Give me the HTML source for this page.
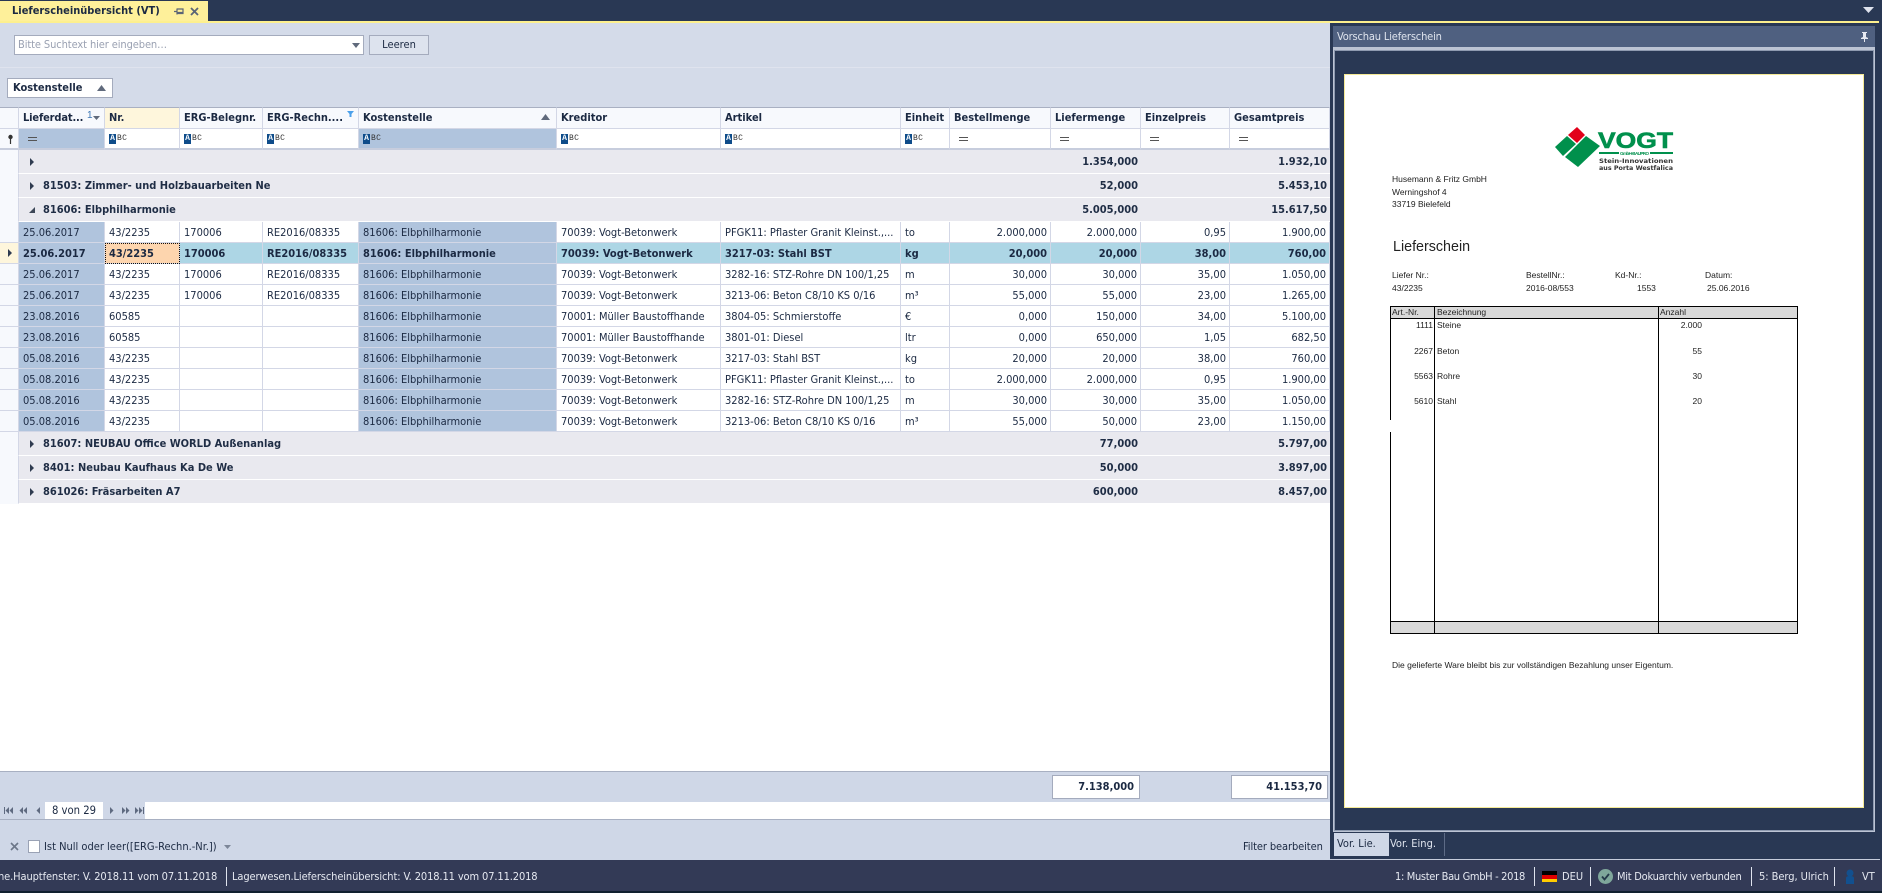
<!DOCTYPE html>
<html lang="de"><head><meta charset="utf-8"><title>Lieferscheinübersicht (VT)</title>
<style>
*{box-sizing:border-box}
html,body{margin:0;padding:0}
body{width:1882px;height:893px;overflow:hidden;position:relative;background:#293854;font:11px "DejaVu Sans",sans-serif;font-stretch:condensed;color:#1b2942}
.a{position:absolute;white-space:nowrap}
table{position:absolute;left:0;top:107px;width:1330px;table-layout:fixed;border-collapse:separate;border-spacing:0;background:transparent}
td{padding:0 4px;white-space:nowrap;overflow:hidden;border-right:1px solid #d3d7e6;border-bottom:1px solid #d3d7e6;background:#fff;height:21px;line-height:19px}
td:first-child{background:#f7f9fd;padding:0}
tr.d td:nth-child(2),tr.d td:nth-child(6){background:#b0c4dd}
tr.d td:nth-child(n+10){text-align:right;padding-right:3px}
tr.s td{font-weight:bold;background:#add6e5}
tr.s td:first-child{background:#fef6dc;position:relative}
tr.s td.f{background:#fdd5ae;outline:1px dotted #111;outline-offset:-1px}
tr.h td{height:21px;background:#f7f9fd;font-weight:bold;border-top:1px solid #a9b0c2;padding-bottom:1px;border-bottom:0;line-height:19px;position:relative}
tr.h td.n{background:#fef6dc}
tr.b td{height:22px;border-bottom:2px solid #c7cddd;position:relative;border-top:1px solid #d3d7e6}
tr.b td.m{background:#b0c4dd}
tr.g td{height:24px;background:#e9e9ef;border-right:0;border-bottom:1px solid #fff;font-weight:bold;color:#1f2d45}
tr.g td:first-child{background:#f7f9fd;border-right:1px solid #d3d7e6;border-bottom:1px solid #f7f9fd}
tr.g td.r{text-align:right;padding-right:3px}
tr.g td.l{padding-left:24px;position:relative}
.tr{position:absolute;left:11px;top:8px;width:0;height:0;border-left:4px solid #2f3b50;border-top:4px solid transparent;border-bottom:4px solid transparent}
.td{position:absolute;left:10px;top:9px;width:0;height:0;border-right:6px solid #3d4858;border-top:6px solid transparent}
.ab{display:inline-block;font:bold 8px/10px "Liberation Mono",monospace;width:7px;height:10px;background:#0e4c8a;color:#fff;text-align:center;vertical-align:middle}
.bc{display:inline-block;font:8px/10px "Liberation Mono",monospace;color:#333;vertical-align:middle;margin-left:1px;letter-spacing:.3px}
.eq{display:block;width:9px;height:4px;border-top:1px solid #555;border-bottom:1px solid #555;margin-left:5px}
.sep{position:absolute;top:867px;width:1px;height:19px;background:#dfe3ee}
.st{position:absolute;top:867px;line-height:19px;color:#e6e9f1;white-space:nowrap}
.doc{position:absolute;white-space:nowrap;font:8.5px/11px "Liberation Sans",sans-serif;color:#222;font-stretch:normal}
.bl{position:absolute;background:#000}
</style></head><body>

<!-- top tab bar -->
<div class="a" style="left:0;top:1px;width:208px;height:21px;background:#fef09a"></div>
<div class="a" style="left:12px;top:2px;line-height:18px;font-size:11px;font-weight:bold;color:#1b2942">Lieferscheinübersicht (VT)</div>
<svg class="a" style="left:172px;top:6px" width="30" height="11" viewBox="0 0 30 11"><path d="M2 5.5h3M5 2.5v6M5 3h6v4.5H5M5 6.5h6" stroke="#5a6476" stroke-width="1.2" fill="none"/><path d="M19 2l7 7M26 2l-7 7" stroke="#5a6476" stroke-width="1.8"/></svg>
<svg class="a" style="left:1863px;top:7px" width="12" height="6"><path d="M0 0h11L5.500 6z" fill="#dfe3ee"/></svg>
<div class="a" style="left:0;top:21px;width:1879px;height:2px;background:#fdf08e"></div>

<!-- main toolbar -->
<div class="a" style="left:0;top:23px;width:1330px;height:84px;background:#d4dbe9"></div>
<div class="a" style="left:14px;top:35px;width:350px;height:20px;background:#fff;border:1px solid #a4abbd;line-height:18px;padding-left:3px;color:#9aa1b2;font-size:11px;letter-spacing:-.1px">Bitte Suchtext hier eingeben…</div>
<svg class="a" style="left:352px;top:43px" width="9" height="5"><path d="M0 0h8L4 5z" fill="#606a7c"/></svg>
<div class="a" style="left:369px;top:35px;width:60px;height:20px;background:#dde3ee;border:1px solid #a4abbd;line-height:18px;text-align:center">Leeren</div>
<div class="a" style="left:0;top:67px;width:1330px;height:1px;background:#dfe3ee"></div>
<div class="a" style="left:7px;top:78px;width:106px;height:20px;background:#fff;border:1px solid #a4abbd;line-height:18px;padding-left:5px;font-weight:bold">Kostenstelle</div>
<svg class="a" style="left:97px;top:85px" width="10" height="6"><path d="M0 6h9L4.500 0z" fill="#606a7c"/></svg>

<!-- grid background -->
<div class="a" style="left:0;top:504px;width:1330px;height:267px;background:#fff"></div>

<table>
<colgroup><col style="width:19px"><col style="width:86px"><col style="width:75px"><col style="width:83px"><col style="width:96px"><col style="width:198px"><col style="width:164px"><col style="width:180px"><col style="width:49px"><col style="width:101px"><col style="width:90px"><col style="width:89px"><col style="width:100px"></colgroup>
<tr class="h"><td></td><td style="letter-spacing:-.15px">Lieferdat...</td><td class="n">Nr.</td><td>ERG-Belegnr.</td><td>ERG-Rechn....</td><td>Kostenstelle</td><td>Kreditor</td><td>Artikel</td><td>Einheit</td><td>Bestellmenge</td><td>Liefermenge</td><td>Einzelpreis</td><td>Gesamtpreis</td></tr>
<tr class="b"><td></td><td class="m"><i class="eq"></i></td><td><i class="ab">A</i><i class="bc">BC</i></td><td><i class="ab">A</i><i class="bc">BC</i></td><td><i class="ab">A</i><i class="bc">BC</i></td><td class="m"><i class="ab">A</i><i class="bc">BC</i></td><td><i class="ab">A</i><i class="bc">BC</i></td><td><i class="ab">A</i><i class="bc">BC</i></td><td><i class="ab">A</i><i class="bc">BC</i></td><td><i class="eq"></i></td><td><i class="eq"></i></td><td><i class="eq"></i></td><td><i class="eq"></i></td></tr>
<tr class="g"><td></td><td class="l" colspan="9"><i class="tr"></i></td><td class="r">1.354,000</td><td></td><td class="r">1.932,10</td></tr>
<tr class="g"><td></td><td class="l" colspan="9"><i class="tr"></i>81503: Zimmer- und Holzbauarbeiten Ne</td><td class="r">52,000</td><td></td><td class="r">5.453,10</td></tr>
<tr class="g"><td></td><td class="l" colspan="9"><i class="td"></i>81606: Elbphilharmonie</td><td class="r">5.005,000</td><td></td><td class="r">15.617,50</td></tr>
<tr class="d"><td></td><td>25.06.2017</td><td>43/2235</td><td>170006</td><td>RE2016/08335</td><td>81606: Elbphilharmonie</td><td>70039: Vogt-Betonwerk</td><td>PFGK11: Pflaster Granit Kleinst.,...</td><td>to</td><td>2.000,000</td><td>2.000,000</td><td>0,95</td><td>1.900,00</td></tr>
<tr class="d s"><td><i class="tr" style="left:8px;top:6px"></i></td><td>25.06.2017</td><td class="f">43/2235</td><td>170006</td><td>RE2016/08335</td><td>81606: Elbphilharmonie</td><td>70039: Vogt-Betonwerk</td><td>3217-03: Stahl BST</td><td>kg</td><td>20,000</td><td>20,000</td><td>38,00</td><td>760,00</td></tr>
<tr class="d"><td></td><td>25.06.2017</td><td>43/2235</td><td>170006</td><td>RE2016/08335</td><td>81606: Elbphilharmonie</td><td>70039: Vogt-Betonwerk</td><td>3282-16: STZ-Rohre DN 100/1,25</td><td>m</td><td>30,000</td><td>30,000</td><td>35,00</td><td>1.050,00</td></tr>
<tr class="d"><td></td><td>25.06.2017</td><td>43/2235</td><td>170006</td><td>RE2016/08335</td><td>81606: Elbphilharmonie</td><td>70039: Vogt-Betonwerk</td><td>3213-06: Beton C8/10 KS 0/16</td><td>m³</td><td>55,000</td><td>55,000</td><td>23,00</td><td>1.265,00</td></tr>
<tr class="d"><td></td><td>23.08.2016</td><td>60585</td><td></td><td></td><td>81606: Elbphilharmonie</td><td>70001: Müller Baustoffhande</td><td>3804-05: Schmierstoffe</td><td>€</td><td>0,000</td><td>150,000</td><td>34,00</td><td>5.100,00</td></tr>
<tr class="d"><td></td><td>23.08.2016</td><td>60585</td><td></td><td></td><td>81606: Elbphilharmonie</td><td>70001: Müller Baustoffhande</td><td>3801-01: Diesel</td><td>ltr</td><td>0,000</td><td>650,000</td><td>1,05</td><td>682,50</td></tr>
<tr class="d"><td></td><td>05.08.2016</td><td>43/2235</td><td></td><td></td><td>81606: Elbphilharmonie</td><td>70039: Vogt-Betonwerk</td><td>3217-03: Stahl BST</td><td>kg</td><td>20,000</td><td>20,000</td><td>38,00</td><td>760,00</td></tr>
<tr class="d"><td></td><td>05.08.2016</td><td>43/2235</td><td></td><td></td><td>81606: Elbphilharmonie</td><td>70039: Vogt-Betonwerk</td><td>PFGK11: Pflaster Granit Kleinst.,...</td><td>to</td><td>2.000,000</td><td>2.000,000</td><td>0,95</td><td>1.900,00</td></tr>
<tr class="d"><td></td><td>05.08.2016</td><td>43/2235</td><td></td><td></td><td>81606: Elbphilharmonie</td><td>70039: Vogt-Betonwerk</td><td>3282-16: STZ-Rohre DN 100/1,25</td><td>m</td><td>30,000</td><td>30,000</td><td>35,00</td><td>1.050,00</td></tr>
<tr class="d"><td></td><td>05.08.2016</td><td>43/2235</td><td></td><td></td><td>81606: Elbphilharmonie</td><td>70039: Vogt-Betonwerk</td><td>3213-06: Beton C8/10 KS 0/16</td><td>m³</td><td>55,000</td><td>50,000</td><td>23,00</td><td>1.150,00</td></tr>
<tr class="g"><td></td><td class="l" colspan="9"><i class="tr"></i>81607: NEUBAU Office WORLD Außenanlag</td><td class="r">77,000</td><td></td><td class="r">5.797,00</td></tr>
<tr class="g"><td></td><td class="l" colspan="9"><i class="tr"></i>8401: Neubau Kaufhaus Ka De We</td><td class="r">50,000</td><td></td><td class="r">3.897,00</td></tr>
<tr class="g"><td></td><td class="l" colspan="9"><i class="tr"></i>861026: Fräsarbeiten A7</td><td class="r">600,000</td><td></td><td class="r">8.457,00</td></tr>
</table>

<!-- header glyphs -->
<svg class="a" style="left:86px;top:110px" width="16" height="12"><text x="1" y="8" font-size="10" font-family="Liberation Sans" fill="#3f78b5">1</text><path d="M7 6h7l-3.500 4z" fill="#606a7c"/></svg>
<svg class="a" style="left:347px;top:111px" width="8" height="8"><path d="M0 0h7L4.500 3v3h-2V3z" fill="#4ba0ea"/></svg>
<svg class="a" style="left:541px;top:114px" width="10" height="6"><path d="M0 6h9L4.500 0z" fill="#606a7c"/></svg>
<svg class="a" style="left:6px;top:134px" width="9" height="11"><circle cx="4.500" cy="3" r="2.200" fill="#333"/><path d="M4.500 5v5" stroke="#333" stroke-width="1.200"/></svg>

<!-- footer -->
<div class="a" style="left:0;top:771px;width:1330px;height:89px;background:#cfd7e7"></div>
<div class="a" style="left:0;top:771px;width:1330px;height:1px;background:#a8b0c2"></div>
<div class="a" style="left:1052px;top:775px;width:88px;height:24px;background:#fff;border:1px solid #a4abbd;text-align:right;padding-right:5px;line-height:22px;font-weight:bold">7.138,000</div>
<div class="a" style="left:1231px;top:775px;width:97px;height:24px;background:#fff;border:1px solid #a4abbd;text-align:right;padding-right:5px;line-height:22px;font-weight:bold">41.153,70</div>
<div class="a" style="left:145px;top:802px;width:1185px;height:17px;background:#fff"></div>
<div class="a" style="left:45px;top:802px;width:58px;height:17px;background:#fff;text-align:center;line-height:17px;font-size:11.200px">8 von 29</div>
<div class="a" style="left:0;top:819px;width:1330px;height:1px;background:#a8b0c2"></div>
<svg class="a" style="left:4px;top:806px" width="142" height="10" fill="#5f6a80"><path d="M0 1h1v7H0zM5 1v7L1.500 4.500zM9 1v7L5.500 4.500zM19 1v7L15.500 4.500zM23 1v7L19.500 4.500zM36 1v7L32.500 4.500zM106 1v7l3.500-3.500zM118 1v7l3.500-3.500zM122 1v7l3.500-3.500zM131 1v7l3.500-3.500zM135 1v7l3.500-3.500zM139 1h1v7h-1z"/></svg>
<svg class="a" style="left:10px;top:842px" width="10" height="10"><path d="M1 1l7 7M8 1l-7 7" stroke="#6d7789" stroke-width="1.600"/></svg>
<div class="a" style="left:28px;top:840px;width:12px;height:13px;background:#fff;border:1px solid #9aa2b5"></div>
<div class="a" style="left:44px;top:838px;line-height:18px;font-size:11px;color:#1b2942">Ist Null oder leer([ERG-Rechn.-Nr.])</div>
<svg class="a" style="left:224px;top:845px" width="8" height="5"><path d="M0 0h7L3.500 4z" fill="#7c8698"/></svg>
<div class="a" style="left:1243px;top:838px;line-height:18px;color:#1b2942;letter-spacing:-.1px">Filter bearbeiten</div>

<!-- right panel -->
<div class="a" style="left:1333px;top:26px;width:542px;height:21px;background:#4f6080;color:#dfe4ee;line-height:21px;padding-left:4px;font-size:11px;letter-spacing:-.17px">Vorschau Lieferschein</div>
<svg class="a" style="left:1860px;top:32px" width="9" height="11"><path d="M2 0h5v1H6v4l2 1v1H5v3H4V7H1V6l2-1V1H2z" fill="#e6e9f1"/></svg>
<div class="a" style="left:1333px;top:47px;width:542px;height:785px;border:1px solid #bcc4d4;border-top-width:3px;background:#293854"></div>
<div class="a" style="left:1334px;top:50px;width:540px;height:781px;border:1px solid #8e9ab0"></div>
<div class="a" style="left:1344px;top:74px;width:520px;height:734px;background:#fff;border:1px solid #f5ea96"></div>

<!-- document -->
<svg class="a" style="left:1550px;top:125px" width="130" height="46" viewBox="1550 125 130 46">
<polygon points="1568,135 1577,127 1585,135 1577,143" fill="#e2001a"/>
<polygon points="1555,147 1567,136 1576,144 1563,156" fill="#00904c"/>
<polygon points="1565,157 1586,136 1600,146 1578,167" fill="#00904c"/>
<text x="1598" y="148" font-family="Liberation Sans" font-weight="bold" font-size="22" fill="#00904c" textLength="75" lengthAdjust="spacingAndGlyphs" stroke="#00904c" stroke-width=".6">VOGT</text>
<rect x="1599" y="152" width="20" height="2" fill="#00904c"/><rect x="1650" y="152" width="23" height="2" fill="#00904c"/>
<text x="1620" y="155" font-family="Liberation Sans" font-weight="bold" font-size="4.500" fill="#00904c" textLength="29">GmbH-BAUPRO</text>
<text x="1599" y="163" font-family="DejaVu Sans" font-weight="bold" font-size="6.500" fill="#333" textLength="74" lengthAdjust="spacingAndGlyphs">Stein-Innovationen</text>
<text x="1599" y="170" font-family="DejaVu Sans" font-weight="bold" font-size="6.500" fill="#333" textLength="74" lengthAdjust="spacingAndGlyphs">aus Porta Westfalica</text>
</svg>
<div class="doc" style="left:1392px;top:174px">Husemann &amp; Fritz GmbH</div>
<div class="doc" style="left:1392px;top:187px">Werningshof 4</div>
<div class="doc" style="left:1392px;top:199px">33719 Bielefeld</div>
<div class="doc" style="left:1393px;top:238px;font-size:14.300px;line-height:18px">Lieferschein</div>
<div class="doc" style="left:1392px;top:270px">Liefer Nr.:</div>
<div class="doc" style="left:1526px;top:270px">BestellNr.:</div>
<div class="doc" style="left:1615px;top:270px">Kd-Nr.:</div>
<div class="doc" style="left:1705px;top:270px">Datum:</div>
<div class="doc" style="left:1392px;top:283px">43/2235</div>
<div class="doc" style="left:1526px;top:283px">2016-08/553</div>
<div class="doc" style="left:1637px;top:283px">1553</div>
<div class="doc" style="left:1707px;top:283px">25.06.2016</div>

<div class="a" style="left:1390px;top:306px;width:408px;height:13px;background:#d9d9d9"></div>
<div class="a" style="left:1390px;top:622px;width:408px;height:11px;background:#d9d9d9"></div>
<div class="bl" style="left:1390px;top:306px;width:408px;height:1px"></div>
<div class="bl" style="left:1390px;top:318px;width:408px;height:1px"></div>
<div class="bl" style="left:1390px;top:621px;width:408px;height:1px"></div>
<div class="bl" style="left:1390px;top:633px;width:408px;height:1px"></div>
<div class="bl" style="left:1390px;top:306px;width:1px;height:114px"></div>
<div class="bl" style="left:1390px;top:432px;width:1px;height:202px"></div>
<div class="bl" style="left:1434px;top:306px;width:1px;height:328px"></div>
<div class="bl" style="left:1658px;top:306px;width:1px;height:328px"></div>
<div class="bl" style="left:1797px;top:306px;width:1px;height:328px"></div>
<div class="doc" style="left:1392px;top:307px">Art.-Nr.</div>
<div class="doc" style="left:1437px;top:307px">Bezeichnung</div>
<div class="doc" style="left:1660px;top:307px">Anzahl</div>
<div class="doc" style="left:1400px;width:33px;text-align:right;top:320px">1111</div><div class="doc" style="left:1437px;top:320px">Steine</div><div class="doc" style="left:1660px;width:42px;text-align:right;top:320px">2.000</div>
<div class="doc" style="left:1400px;width:33px;text-align:right;top:346px">2267</div><div class="doc" style="left:1437px;top:346px">Beton</div><div class="doc" style="left:1660px;width:42px;text-align:right;top:346px">55</div>
<div class="doc" style="left:1400px;width:33px;text-align:right;top:371px">5563</div><div class="doc" style="left:1437px;top:371px">Rohre</div><div class="doc" style="left:1660px;width:42px;text-align:right;top:371px">30</div>
<div class="doc" style="left:1400px;width:33px;text-align:right;top:396px">5610</div><div class="doc" style="left:1437px;top:396px">Stahl</div><div class="doc" style="left:1660px;width:42px;text-align:right;top:396px">20</div>
<div class="doc" style="left:1392px;top:660px">Die gelieferte Ware bleibt bis zur vollständigen Bezahlung unser Eigentum.</div>

<!-- preview tabs -->
<div class="a" style="left:1334px;top:833px;width:55px;height:23px;background:#cfd7e7;line-height:21px;padding-left:3px">Vor. Lie.</div>
<div class="a" style="left:1390px;top:833px;line-height:21px;color:#dfe4ee">Vor. Eing.</div>
<div class="a" style="left:1444px;top:833px;width:1px;height:23px;background:#5d6b86"></div>
<div class="a" style="left:1330px;top:859px;width:550px;height:1px;background:#c5ccdb"></div>

<!-- status bar -->
<div class="a" style="left:0;top:860px;width:1882px;height:31px;background:#333a56"></div>
<div class="a" style="left:0;top:891px;width:1882px;height:2px;background:#10202f"></div>
<div class="st" style="left:-2px;letter-spacing:-.11px">ne.Hauptfenster: V. 2018.11 vom 07.11.2018</div>
<div class="sep" style="left:226px"></div>
<div class="st" style="left:232px;letter-spacing:-.12px">Lagerwesen.Lieferscheinübersicht: V. 2018.11 vom 07.11.2018</div>
<div class="st" style="left:1395px;letter-spacing:-.33px">1: Muster Bau GmbH - 2018</div>
<div class="sep" style="left:1534px"></div>
<svg class="a" style="left:1542px;top:871px" width="15" height="11"><rect width="15" height="4" fill="#000"/><rect y="4" width="15" height="4" fill="#d00"/><rect y="8" width="15" height="3" fill="#fc0"/></svg>
<div class="st" style="left:1562px">DEU</div>
<div class="sep" style="left:1590px"></div>
<svg class="a" style="left:1598px;top:869px" width="15" height="15"><circle cx="7.500" cy="7.500" r="7.500" fill="#7fa79b"/><path d="M4 7.500l2.500 3L11 5" stroke="#25394a" stroke-width="1.800" fill="none"/></svg>
<div class="st" style="left:1617px;letter-spacing:-.25px">Mit Dokuarchiv verbunden</div>
<div class="sep" style="left:1751px"></div>
<div class="st" style="left:1759px;letter-spacing:-.05px">5: Berg, Ulrich</div>
<div class="sep" style="left:1834px"></div>
<svg class="a" style="left:1844px;top:869px" width="12" height="15"><circle cx="6" cy="4" r="3.500" fill="#12508f"/><path d="M2 15V9q0-2 4-2t4 2v6z" fill="#12508f"/></svg>
<div class="st" style="left:1862px">VT</div>
</body></html>
